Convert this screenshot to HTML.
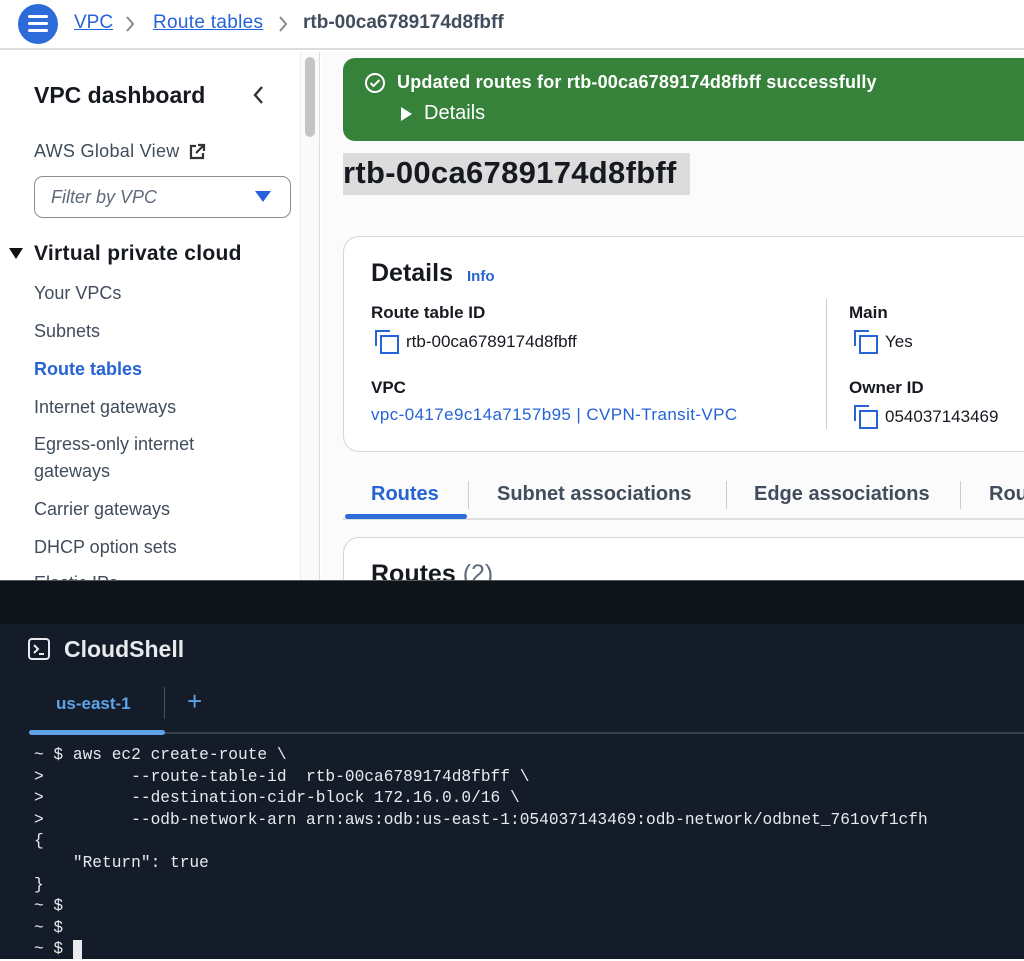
<!DOCTYPE html>
<html><head><meta charset="utf-8"><style>
*{margin:0;padding:0;box-sizing:border-box}
body{width:1024px;height:959px;overflow:hidden;position:relative;background:#fff;font-family:"Liberation Sans",sans-serif;color:#16191f}
.a{position:absolute;white-space:nowrap}
.nav{font-size:18px;color:#414d5c}
.mono{font-family:"Liberation Mono",monospace;font-size:16.2px;color:#e8eaed;line-height:21.6px;white-space:pre}
.cp{display:inline-block;width:20px;height:20px;position:relative;vertical-align:-3px;margin-right:11px}
.cp:before{content:"";position:absolute;left:0;top:0;width:13px;height:14px;border-left:2.5px solid #2563d6;border-top:2.5px solid #2563d6}
.cp:after{content:"";position:absolute;left:5px;top:5px;width:15px;height:15px;border:2.5px solid #2563d6}
</style></head><body>
<div class="a" style="left:0;top:0;width:1024px;height:50px;background:#fff;border-bottom:2px solid #dcdcdc"></div>
<div class="a" style="left:18px;top:4px;width:40px;height:40px;border-radius:50%;background:#2d6bd9"></div>
<div class="a" style="left:28px;top:15px;width:20px;height:3px;background:#fff;border-radius:2px"></div>
<div class="a" style="left:28px;top:22px;width:20px;height:3px;background:#fff;border-radius:2px"></div>
<div class="a" style="left:28px;top:29px;width:20px;height:3px;background:#fff;border-radius:2px"></div>
<div class="a" style="left:74px;top:12px;font-size:19px;color:#2563d6;text-decoration:underline">VPC</div>
<svg class="a" style="left:125px;top:16px" width="10" height="16"><path d="M2 1l6 7-6 7" stroke="#888" stroke-width="2" fill="none"/></svg>
<div class="a" style="left:153px;top:12px;font-size:19px;color:#2563d6;text-decoration:underline;letter-spacing:0.3px">Route tables</div>
<svg class="a" style="left:278px;top:16px" width="10" height="16"><path d="M2 1l6 7-6 7" stroke="#888" stroke-width="2" fill="none"/></svg>
<div class="a" style="left:303px;top:12px;font-size:19px;color:#414d5c;font-weight:bold">rtb-00ca6789174d8fbff</div>
<div class="a" style="left:34px;top:82px;font-size:23px;font-weight:bold">VPC dashboard</div>
<svg class="a" style="left:252px;top:85px" width="12" height="20"><path d="M10 2l-7 8 7 8" stroke="#333" stroke-width="2.4" fill="none"/></svg>
<div class="a nav" style="left:34px;top:141px;letter-spacing:0.3px">AWS Global View</div>
<svg class="a" style="left:188px;top:143px" width="18" height="18" viewBox="0 0 18 18"><path d="M8 3H3v12h12v-5M10 2h6v6M16 2L8 10" stroke="#333" stroke-width="2.2" fill="none"/></svg>
<div class="a" style="left:34px;top:176px;width:257px;height:42px;border:1.5px solid #8c8c94;border-radius:9px"></div>
<div class="a" style="left:51px;top:187px;font-size:18px;font-style:italic;color:#5f6b7a">Filter by VPC</div>
<svg class="a" style="left:255px;top:191px" width="16" height="12"><path d="M0 0H16L8 11Z" fill="#2563d6"/></svg>
<svg class="a" style="left:9px;top:248px" width="14" height="12"><path d="M0 0H14L7 11Z" fill="#111"/></svg>
<div class="a" style="left:34px;top:242px;font-size:21px;font-weight:bold;letter-spacing:0.3px">Virtual private cloud</div>
<div class="a nav" style="left:34px;top:283px">Your VPCs</div>
<div class="a nav" style="left:34px;top:321px">Subnets</div>
<div class="a nav" style="left:34px;top:359px;color:#2563d6;font-weight:bold">Route tables</div>
<div class="a nav" style="left:34px;top:397px">Internet gateways</div>
<div class="a nav" style="left:34px;top:434px">Egress-only internet</div>
<div class="a nav" style="left:34px;top:461px">gateways</div>
<div class="a nav" style="left:34px;top:499px">Carrier gateways</div>
<div class="a nav" style="left:34px;top:537px">DHCP option sets</div>
<div class="a nav" style="left:34px;top:573px">Elastic IPs</div>
<div class="a" style="left:300px;top:52px;width:20px;height:528px;background:#fafafa;border-left:1px solid #eee;border-right:1px solid #ddd"></div>
<div class="a" style="left:305px;top:57px;width:10px;height:80px;background:#c4c4c4;border-radius:5px"></div>
<div class="a" style="left:321px;top:52px;width:703px;height:528px;background:#fbfbfb"></div>
<div class="a" style="left:343px;top:58px;width:700px;height:83px;background:#37823b;border-radius:12px"></div>
<svg class="a" style="left:364px;top:72px" width="22" height="22" viewBox="0 0 22 22"><circle cx="11" cy="11" r="9" stroke="#fff" stroke-width="2" fill="none"/><path d="M6.5 11l3 3 6-6" stroke="#fff" stroke-width="2" fill="none"/></svg>
<div class="a" style="left:397px;top:72px;font-size:18px;font-weight:bold;color:#fff;letter-spacing:0.2px">Updated routes for rtb-00ca6789174d8fbff successfully</div>
<svg class="a" style="left:401px;top:107px" width="11" height="14"><path d="M0 0L11 7L0 14Z" fill="#fff"/></svg>
<div class="a" style="left:424px;top:102px;font-size:20px;color:#fff">Details</div>
<div class="a" style="left:343px;top:153px;width:347px;height:42px;background:#dcdcdc"></div>
<div class="a" style="left:343px;top:155px;font-size:31px;font-weight:bold;letter-spacing:0.3px">rtb-00ca6789174d8fbff</div>
<div class="a" style="left:343px;top:236px;width:700px;height:216px;background:#fff;border:1.5px solid #d5d5d8;border-radius:16px"></div>
<div class="a" style="left:371px;top:259px;font-size:25px;font-weight:bold">Details</div>
<div class="a" style="left:467px;top:268px;font-size:15px;font-weight:bold;color:#2563d6">Info</div>
<div class="a" style="left:371px;top:303px;font-size:17px;font-weight:bold">Route table ID</div>
<div class="a" style="left:375px;top:330px;font-size:17px"><span class="cp"></span>rtb-00ca6789174d8fbff</div>
<div class="a" style="left:371px;top:378px;font-size:17px;font-weight:bold">VPC</div>
<div class="a" style="left:371px;top:405px;font-size:17px;color:#2563d6;letter-spacing:0.4px">vpc-0417e9c14a7157b95 | CVPN-Transit-VPC</div>
<div class="a" style="left:826px;top:299px;width:1px;height:130px;background:#ccc"></div>
<div class="a" style="left:849px;top:303px;font-size:17px;font-weight:bold">Main</div>
<div class="a" style="left:854px;top:330px;font-size:17px"><span class="cp"></span>Yes</div>
<div class="a" style="left:849px;top:378px;font-size:17px;font-weight:bold">Owner ID</div>
<div class="a" style="left:854px;top:405px;font-size:17px"><span class="cp"></span>054037143469</div>
<div class="a" style="left:371px;top:483px;font-size:20px;font-weight:bold;color:#2563d6">Routes</div>
<div class="a" style="left:468px;top:481px;width:1px;height:28px;background:#ccc"></div>
<div class="a" style="left:497px;top:483px;font-size:20px;font-weight:bold;color:#414d5c">Subnet associations</div>
<div class="a" style="left:726px;top:481px;width:1px;height:28px;background:#ccc"></div>
<div class="a" style="left:754px;top:483px;font-size:20px;font-weight:bold;color:#414d5c">Edge associations</div>
<div class="a" style="left:960px;top:481px;width:1px;height:28px;background:#ccc"></div>
<div class="a" style="left:989px;top:483px;font-size:20px;font-weight:bold;color:#414d5c">Routes</div>
<div class="a" style="left:343px;top:518px;width:681px;height:2px;background:#ddd"></div>
<div class="a" style="left:345px;top:514px;width:122px;height:5px;background:#2d6bd9;border-radius:3px"></div>
<div class="a" style="left:343px;top:537px;width:700px;height:80px;background:#fff;border:1.5px solid #d5d5d8;border-radius:16px"></div>
<div class="a" style="left:371px;top:560px;font-size:25px;font-weight:bold">Routes <span style="font-weight:normal;color:#5f6b7a">(2)</span></div>
<div class="a" style="left:0;top:580px;width:1024px;height:44px;background:#0f141b;border-top:1px solid #555"></div>
<div class="a" style="left:0;top:624px;width:1024px;height:335px;background:#141c29"></div>
<svg class="a" style="left:28px;top:638px" width="22" height="22" viewBox="0 0 22 22"><rect x="1" y="1" width="20" height="20" rx="3" stroke="#e8eaed" stroke-width="2" fill="none"/><path d="M6 7l4 4-4 4M11 16h5" stroke="#e8eaed" stroke-width="2" fill="none"/></svg>
<div class="a" style="left:64px;top:636px;font-size:23px;font-weight:bold;color:#e8eaed">CloudShell</div>
<div class="a" style="left:56px;top:694px;font-size:17px;font-weight:bold;color:#5ea3e6">us-east-1</div>
<div class="a" style="left:164px;top:687px;width:1px;height:32px;background:#4a5260"></div>
<div class="a" style="left:187px;top:686px;font-size:26px;color:#5ea3e6">+</div>
<div class="a" style="left:29px;top:732px;width:995px;height:2px;background:#3a4250"></div>
<div class="a" style="left:29px;top:730px;width:136px;height:5px;background:#5ea3e6;border-radius:3px"></div>
<div class="a mono" style="left:34px;top:745px">~ $ aws ec2 create-route \
&gt;         --route-table-id  rtb-00ca6789174d8fbff \
&gt;         --destination-cidr-block 172.16.0.0/16 \
&gt;         --odb-network-arn arn:aws:odb:us-east-1:054037143469:odb-network/odbnet_761ovf1cfh
{
    "Return": true
}
~ $
~ $
~ $ </div>
<div class="a" style="left:73px;top:940px;width:9px;height:19px;background:#e8eaed"></div>
</body></html>
